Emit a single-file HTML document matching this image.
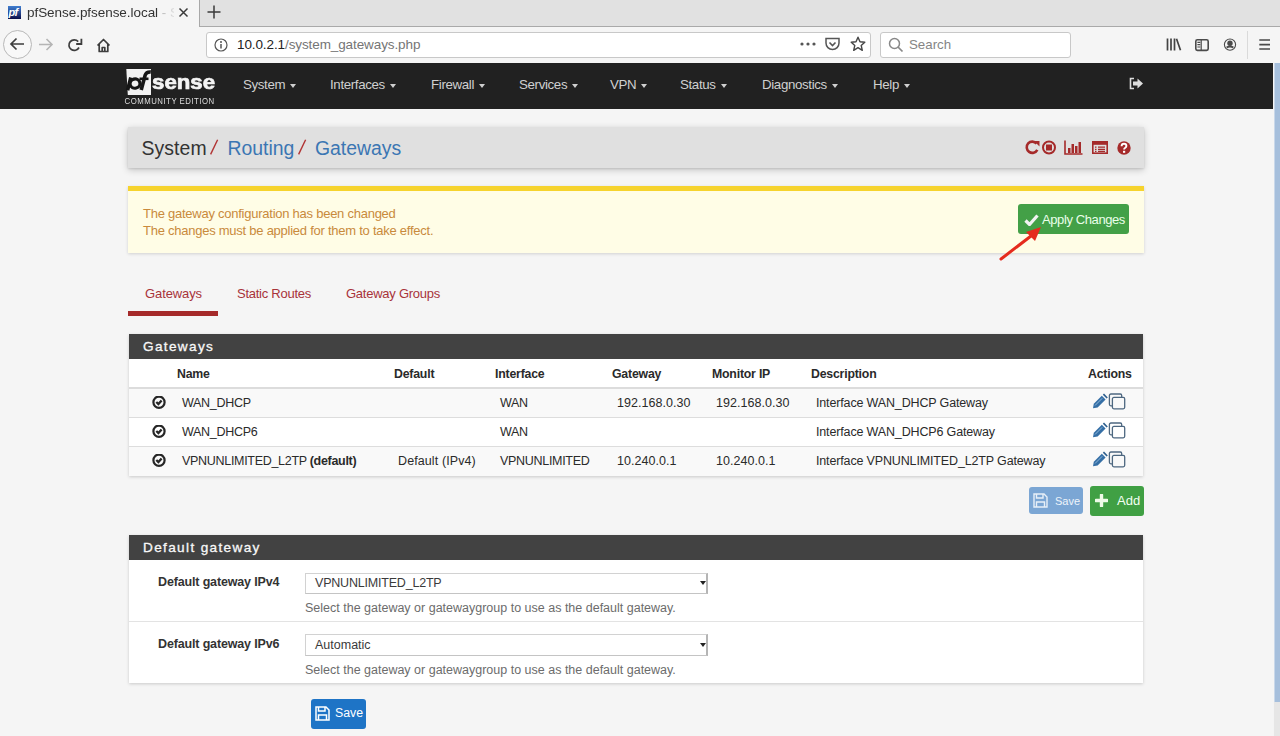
<!DOCTYPE html>
<html><head><meta charset="utf-8">
<style>
*{box-sizing:border-box}
html,body{margin:0;padding:0}
body{width:1280px;height:736px;overflow:hidden;position:relative;background:#f5f5f5;font-family:"Liberation Sans",sans-serif;color:#212121}
.a{position:absolute;white-space:nowrap}
/* browser chrome */
#tabbar{left:0;top:0;width:1280px;height:27px;background:#e1e1e1;border-bottom:1px solid #a9a9a9}
#tab{left:0;top:0;width:200px;height:27px;background:#f5f5f5;border-right:1px solid #a8a8a8}
#toolbar{left:0;top:27px;width:1280px;height:36px;background:#f5f5f5}
.urlbox{background:#fff;border:1px solid #c8c8c8;border-radius:3px}
/* pfsense nav */
#nav{left:0;top:63px;width:1273px;height:46px;background:#212121}
.nv{top:77px;color:#d0d0d0;font-size:13.3px;letter-spacing:-0.35px}
.caret{display:inline-block;width:0;height:0;border-left:3.5px solid transparent;border-right:3.5px solid transparent;border-top:4px solid #d0d0d0;vertical-align:middle;margin-left:5px;margin-top:2px}
#scroll{left:1274px;top:63px;width:6px;height:639px;background:#a6bfdc;border-left:1px solid #c9d8ea}
#track{left:1273px;top:702px;width:7px;height:34px;background:#e6e6e6;border-left:1px solid #f4f4f4}
.panelbox{background:#fff;box-shadow:0 1px 3px rgba(0,0,0,.18)}
.ph{background:#424242;color:#f8f8f8;font-size:13.6px;letter-spacing:1.35px;-webkit-text-stroke:0.3px #f8f8f8}
.th{font-weight:bold;font-size:12.3px;color:#2a2a2a;top:367px;letter-spacing:-0.2px}
.td{font-size:12.5px;color:#2a2a2a;letter-spacing:-0.3px}
.hr{height:1px;background:#ddd}
</style></head><body>

<!-- ===== Browser tab bar ===== -->
<div class="a" id="tabbar"></div>
<div class="a" id="tab"></div>
<!-- favicon -->
<div class="a" style="left:8px;top:6px;width:13px;height:13px;background:linear-gradient(180deg,#3f7ed0 0%,#2a4f9a 45%,#0c0c48 100%)"></div>
<div class="a" style="left:8.5px;top:6px;font:italic bold 11px 'Liberation Sans';color:#fff;line-height:13px;letter-spacing:-0.8px">pf</div>
<div class="a" style="left:27px;top:5px;width:147px;overflow:hidden;font-size:13.5px;color:#333;line-height:16px;letter-spacing:-0.05px;-webkit-mask-image:linear-gradient(90deg,#000 0,#000 131px,rgba(0,0,0,.3) 135px,rgba(0,0,0,.12) 147px)">pfSense.pfsense.local - System: Routing</div>
<svg class="a" style="left:178px;top:7px" width="11" height="11" viewBox="0 0 11 11"><path d="M1.5 1.5L9.5 9.5M9.5 1.5L1.5 9.5" stroke="#3a3a3a" stroke-width="1.5"/></svg>
<svg class="a" style="left:207px;top:5px" width="14" height="14" viewBox="0 0 14 14"><path d="M7 0.5V13.5M0.5 7H13.5" stroke="#3a3a3a" stroke-width="1.5"/></svg>

<!-- ===== Toolbar ===== -->
<div class="a" id="toolbar"></div>
<!-- back -->
<div class="a" style="left:3px;top:30px;width:29px;height:29px;border:1px solid #b8b8b8;border-radius:50%;background:#f8f8f8"></div>
<svg class="a" style="left:9px;top:37px" width="16" height="14" viewBox="0 0 16 14"><path d="M15 7H2M7.5 1.5L2 7l5.5 5.5" stroke="#3d3d3d" stroke-width="1.7" fill="none"/></svg>
<svg class="a" style="left:38px;top:38px" width="16" height="13" viewBox="0 0 16 13"><path d="M1 6.5H14M8.5 1L14 6.5 8.5 12" stroke="#b5b5b5" stroke-width="1.6" fill="none"/></svg>
<svg class="a" style="left:67px;top:37px" width="16" height="16" viewBox="0 0 16 16"><path d="M12 10.5A5.3 5.3 0 1 1 11.2 4.6" stroke="#3d3d3d" stroke-width="1.7" fill="none"/><path d="M14.4 1.8V7H9.2" stroke="#3d3d3d" stroke-width="1.8" fill="none"/></svg>
<svg class="a" style="left:96px;top:38px" width="15" height="15" viewBox="0 0 15 15"><path d="M1.5 7.5L7.5 1.5 13.5 7.5M3.2 6V13.5H11.8V6M6.2 13.5V9.5H8.8V13.5" stroke="#3d3d3d" stroke-width="1.7" fill="none" stroke-linejoin="round"/></svg>
<!-- url box -->
<div class="a urlbox" style="left:206px;top:32px;width:665px;height:26px"></div>
<svg class="a" style="left:214px;top:38px" width="14" height="14" viewBox="0 0 14 14"><circle cx="7" cy="7" r="6" stroke="#555" stroke-width="1.2" fill="none"/><circle cx="7" cy="4" r="1" fill="#555"/><path d="M7 6V10.5" stroke="#555" stroke-width="1.5"/></svg>
<div class="a" style="left:237px;top:37px;font-size:13.5px;line-height:16px;color:#222;letter-spacing:-0.1px">10.0.2.1<span style="color:#757575">/system_gateways.php</span></div>
<svg class="a" style="left:800px;top:42px" width="16" height="4" viewBox="0 0 16 4"><circle cx="2" cy="2" r="1.6" fill="#555"/><circle cx="8" cy="2" r="1.6" fill="#555"/><circle cx="14" cy="2" r="1.6" fill="#555"/></svg>
<svg class="a" style="left:825px;top:37px" width="15" height="14" viewBox="0 0 15 14"><path d="M1 1.5H14V6A6.5 6.5 0 0 1 1 6z" stroke="#555" stroke-width="1.5" fill="none"/><path d="M4.5 5.5L7.5 8.5 10.5 5.5" stroke="#555" stroke-width="1.6" fill="none"/></svg>
<svg class="a" style="left:850px;top:36px" width="16" height="16" viewBox="0 0 16 16"><path d="M8 1.2L10 5.8 14.8 6.2 11.2 9.4 12.3 14.3 8 11.7 3.7 14.3 4.8 9.4 1.2 6.2 6 5.8z" stroke="#444" stroke-width="1.4" fill="none" stroke-linejoin="round"/></svg>
<!-- search -->
<div class="a urlbox" style="left:880px;top:32px;width:191px;height:26px"></div>
<svg class="a" style="left:888px;top:37px" width="16" height="16" viewBox="0 0 16 16"><circle cx="6.5" cy="6.5" r="5" stroke="#888" stroke-width="1.5" fill="none"/><path d="M10 10L14.5 14.5" stroke="#888" stroke-width="1.7"/></svg>
<div class="a" style="left:909px;top:37px;font-size:13.3px;line-height:16px;color:#858585">Search</div>
<!-- right icons -->
<svg class="a" style="left:1166px;top:38px" width="16" height="13" viewBox="0 0 16 13"><path d="M1.5 0.5V12.5M5 0.5V12.5M8.5 0.5V12.5M10.5 0.8L14.5 12.3" stroke="#444" stroke-width="1.7"/></svg>
<svg class="a" style="left:1194px;top:38px" width="16" height="14" viewBox="0 0 16 14"><rect x="1.8" y="1.8" width="12.4" height="10.6" rx="1.6" stroke="#4a4a4a" stroke-width="1.6" fill="none"/><path d="M7.2 1.8V12.4M3.4 4.4H6.2M3.4 6.7H6.2M3.4 9H6.2" stroke="#4a4a4a" stroke-width="1.2"/></svg>
<svg class="a" style="left:1223px;top:37px" width="15" height="15" viewBox="0 0 15 15"><circle cx="7" cy="7.6" r="5.6" stroke="#4a4a4a" stroke-width="1.1" fill="none"/><circle cx="7" cy="6.2" r="2.7" fill="#4a4a4a"/><path d="M3.6 10.6Q7 8.4 10.4 10.6" stroke="#4a4a4a" stroke-width="1.8" fill="none"/></svg>
<div class="a" style="left:1247px;top:31px;width:1px;height:28px;background:#dadada"></div>
<svg class="a" style="left:1259px;top:38px" width="12" height="13" viewBox="0 0 12 13"><path d="M0.3 2H11M0.3 6.6H11M0.3 11H11" stroke="#4a4a4a" stroke-width="1.7"/></svg>

<!-- ===== pfSense navbar ===== -->
<div class="a" id="nav"></div>
<div class="a" id="scroll"></div>
<div class="a" id="track"></div>
<!-- logo -->
<svg class="a" style="left:120px;top:64px" width="100" height="42" viewBox="120 64 100 42">
<path d="M126.3 69H151V95H127.8z" fill="#f2f2f2"/>
<path d="M130.8 77.5L127.6 90.2" stroke="#161616" stroke-width="3.6" fill="none"/>
<ellipse cx="135" cy="83.6" rx="5" ry="4.6" stroke="#161616" stroke-width="3.2" fill="none" transform="rotate(-15 135 83.6)"/>
<path d="M141.2 90L145.2 75Q146.4 71.6 150.8 72" stroke="#161616" stroke-width="3.6" fill="none"/>
<path d="M139.5 78.8H148.5" stroke="#161616" stroke-width="2.6"/>
</svg>
<div class="a" style="left:152px;top:70px;font:bold 21px 'Liberation Sans';color:#f4f4f4;letter-spacing:0px;line-height:24px;-webkit-text-stroke:0.7px #f4f4f4;transform:scaleX(1.06);transform-origin:0 0">sense</div>
<div class="a" style="left:124.5px;top:96px;font-size:7.8px;color:#dedede;letter-spacing:0.5px;line-height:9px;transform:scaleY(1.12);transform-origin:0 0">COMMUNITY EDITION</div>
<div class="a nv" style="left:243px">System<span class="caret"></span></div>
<div class="a nv" style="left:330px">Interfaces<span class="caret"></span></div>
<div class="a nv" style="left:431px">Firewall<span class="caret"></span></div>
<div class="a nv" style="left:519px">Services<span class="caret"></span></div>
<div class="a nv" style="left:610px">VPN<span class="caret"></span></div>
<div class="a nv" style="left:680px">Status<span class="caret"></span></div>
<div class="a nv" style="left:762px">Diagnostics<span class="caret"></span></div>
<div class="a nv" style="left:873px">Help<span class="caret"></span></div>
<!-- logout icon -->
<svg class="a" style="left:1129px;top:77px" width="15" height="13" viewBox="0 0 15 13"><path d="M5 1.5H1.5V11.5H5" stroke="#ddd" stroke-width="1.6" fill="none"/><path d="M4 4.5H8.5V1.5L14 6.5 8.5 11.5V8.5H4z" fill="#ddd"/></svg>

<!-- ===== Breadcrumb panel ===== -->
<div class="a" style="left:128px;top:127px;width:1016px;height:41px;background:#e0e0e0;box-shadow:0 1px 2px rgba(0,0,0,.1),0 2px 7px rgba(0,0,0,.2)"></div>
<div class="a" style="left:141.5px;top:136.5px;font-size:19.4px;line-height:22px;color:#333;letter-spacing:0.1px">System</div>
<svg class="a" style="left:205px;top:136px" width="20" height="22" viewBox="0 0 20 22"><path d="M12.6 3.8L5.6 18.4" stroke="#b13434" stroke-width="1.4"/></svg>
<div class="a" style="left:227.5px;top:136.5px;font-size:19.4px;line-height:22px;color:#3b76b3">Routing</div>
<svg class="a" style="left:293px;top:136px" width="20" height="22" viewBox="0 0 20 22"><path d="M12.6 3.8L5.6 18.4" stroke="#b13434" stroke-width="1.4"/></svg>
<div class="a" style="left:315px;top:136.5px;font-size:19.4px;line-height:22px;color:#3b76b3">Gateways</div>
<!-- breadcrumb icons -->
<svg class="a" style="left:1025px;top:140px" width="32" height="15" viewBox="0 0 32 15"><path d="M12.3 9.8A5.6 5.6 0 1 1 11.6 3.6" stroke="#a52a2a" stroke-width="2.6" fill="none"/><path d="M9 1H14.5V6.5z" fill="#a52a2a"/><circle cx="24" cy="7.5" r="6" stroke="#a52a2a" stroke-width="2" fill="none"/><rect x="21" y="4.5" width="6" height="6" fill="#a52a2a"/></svg>
<svg class="a" style="left:1064px;top:140px" width="19" height="15" viewBox="0 0 19 15"><path d="M1 0.5V14H18.5" stroke="#a52a2a" stroke-width="1.6" fill="none"/><rect x="4" y="8" width="2.5" height="5" fill="#a52a2a"/><rect x="7.5" y="4" width="2.5" height="9" fill="#a52a2a"/><rect x="11" y="6" width="2.5" height="7" fill="#a52a2a"/><rect x="14.5" y="2" width="2.5" height="11" fill="#a52a2a"/></svg>
<svg class="a" style="left:1092px;top:141px" width="16" height="13" viewBox="0 0 16 13"><rect x="0.8" y="0.8" width="14.4" height="11.4" stroke="#a52a2a" stroke-width="1.6" fill="none"/><rect x="0.8" y="0.8" width="14.4" height="3" fill="#a52a2a"/><path d="M3 6.2H4.5M6 6.2H13M3 8.3H4.5M6 8.3H13M3 10.4H4.5M6 10.4H13" stroke="#a52a2a" stroke-width="1.3"/></svg>
<svg class="a" style="left:1117px;top:141px" width="14" height="14" viewBox="0 0 14 14"><circle cx="7" cy="7" r="6.7" fill="#a52a2a"/><path d="M4.6 5.2Q4.6 2.8 7 2.8 9.4 2.8 9.4 5 9.4 6.2 8 7 7.1 7.5 7.1 8.6" stroke="#fff" stroke-width="1.9" fill="none"/><rect x="6" y="9.8" width="2.2" height="2" fill="#fff"/></svg>

<!-- ===== Alert ===== -->
<div class="a" style="left:128px;top:186px;width:1016px;height:67px;background:#fffde6;border-top:5px solid #f6d32d;box-shadow:0 1px 3px rgba(0,0,0,.15)"></div>
<div class="a" style="left:143px;top:205px;font-size:13px;line-height:17px;color:#c98a3c;letter-spacing:-0.25px">The gateway configuration has been changed<br>The changes must be applied for them to take effect.</div>
<div class="a" style="left:1018px;top:204px;width:111px;height:30px;background:#43a047;border-radius:3px"></div>
<svg class="a" style="left:1024px;top:214px" width="15" height="12" viewBox="0 0 15 12"><path d="M1.5 6.5L5.5 10.5 13.5 1.5" stroke="#f2f2f2" stroke-width="3.2" fill="none"/></svg>
<div class="a" style="left:1042px;top:212px;font-size:13px;line-height:15px;color:#eaffea;letter-spacing:-0.4px">Apply Changes</div>
<!-- red annotation arrow -->
<svg class="a" style="left:990px;top:215px" width="60" height="50" viewBox="990 215 60 50"><path d="M1001 259L1031 236" stroke="#e52b1d" stroke-width="3" stroke-linecap="round"/><path d="M1041 227L1026 232 1035 241z" fill="#e52b1d"/></svg>

<!-- ===== Tabs ===== -->
<div class="a" style="left:145px;top:286px;font-size:13px;color:#a8333a;letter-spacing:-0.1px">Gateways</div>
<div class="a" style="left:237px;top:286px;font-size:13px;color:#a8333a;letter-spacing:-0.25px">Static Routes</div>
<div class="a" style="left:346px;top:286px;font-size:13px;color:#a8333a;letter-spacing:-0.25px">Gateway Groups</div>
<div class="a" style="left:128px;top:311px;width:90px;height:5px;background:#a52a2a"></div>

<!-- ===== Gateways panel ===== -->
<div class="a panelbox" style="left:129px;top:334px;width:1014px;height:142px"></div>
<div class="a ph" style="left:129px;top:334px;width:1014px;height:25px;padding:4.5px 0 0 14px;line-height:15px">Gateways</div>
<div class="a" style="left:129px;top:389px;width:1014px;height:29px;background:#f9f9f9"></div>
<div class="a" style="left:129px;top:447px;width:1014px;height:29px;background:#f9f9f9"></div>
<div class="a" style="left:129px;top:387px;width:1014px;height:2px;background:#dcdcdc"></div>
<div class="a hr" style="left:129px;top:417px;width:1014px"></div>
<div class="a hr" style="left:129px;top:446px;width:1014px"></div>

<div class="a th" style="left:177px">Name</div>
<div class="a th" style="left:394px">Default</div>
<div class="a th" style="left:495px">Interface</div>
<div class="a th" style="left:612px">Gateway</div>
<div class="a th" style="left:712px">Monitor IP</div>
<div class="a th" style="left:811px">Description</div>
<div class="a th" style="left:1088px">Actions</div>

<!-- rows -->
<div class="a td" style="left:182px;top:396px">WAN_DHCP</div>
<div class="a td" style="left:500px;top:396px">WAN</div>
<div class="a td" style="left:617px;top:396px;letter-spacing:0.05px">192.168.0.30</div>
<div class="a td" style="left:716px;top:396px;letter-spacing:0.05px">192.168.0.30</div>
<div class="a td" style="left:816px;top:396px;letter-spacing:-0.15px">Interface WAN_DHCP Gateway</div>

<div class="a td" style="left:182px;top:425px">WAN_DHCP6</div>
<div class="a td" style="left:500px;top:425px">WAN</div>
<div class="a td" style="left:816px;top:425px;letter-spacing:-0.15px">Interface WAN_DHCP6 Gateway</div>

<div class="a td" style="left:182px;top:454px">VPNUNLIMITED_L2TP <b>(default)</b></div>
<div class="a td" style="left:398px;top:454px;letter-spacing:0.1px">Default (IPv4)</div>
<div class="a td" style="left:500px;top:454px">VPNUNLIMITED</div>
<div class="a td" style="left:617px;top:454px;letter-spacing:0.05px">10.240.0.1</div>
<div class="a td" style="left:716px;top:454px;letter-spacing:0.05px">10.240.0.1</div>
<div class="a td" style="left:816px;top:454px;letter-spacing:-0.15px">Interface VPNUNLIMITED_L2TP Gateway</div>

<!-- row icons -->
<svg class="a" style="left:152px;top:396px" width="14" height="13" viewBox="0 0 14 13"><circle cx="7" cy="6.2" r="5.6" stroke="#262626" stroke-width="2.2" fill="none"/><path d="M4.3 6L6.4 8.1 9.6 4.4" stroke="#262626" stroke-width="2.3" fill="none"/></svg>
<svg class="a" style="left:152px;top:425px" width="14" height="13" viewBox="0 0 14 13"><circle cx="7" cy="6.2" r="5.6" stroke="#262626" stroke-width="2.2" fill="none"/><path d="M4.3 6L6.4 8.1 9.6 4.4" stroke="#262626" stroke-width="2.3" fill="none"/></svg>
<svg class="a" style="left:152px;top:454px" width="14" height="13" viewBox="0 0 14 13"><circle cx="7" cy="6.2" r="5.6" stroke="#262626" stroke-width="2.2" fill="none"/><path d="M4.3 6L6.4 8.1 9.6 4.4" stroke="#262626" stroke-width="2.3" fill="none"/></svg>

<svg class="a" style="left:1092px;top:393px" width="34" height="17" viewBox="0 0 34 17"><path d="M1 15.2L1.8 10.8 9.8 2.8 13.6 6.6 5.6 14.6z" fill="#356fa6"/><path d="M3 12.5L10.2 5.3" stroke="#9cc0e0" stroke-width="0.9"/><path d="M10.8 1.8L12 0.6 15.8 4.4 14.6 5.6z" fill="#2e5f8e"/><rect x="17.4" y="1" width="12.3" height="11.8" rx="1.5" stroke="#4d6780" stroke-width="1.3" fill="none"/><rect x="20.4" y="4.4" width="12.3" height="11.4" rx="1.5" stroke="#4d6780" stroke-width="1.3" fill="#f9f9f9"/></svg>
<svg class="a" style="left:1092px;top:422px" width="34" height="17" viewBox="0 0 34 17"><path d="M1 15.2L1.8 10.8 9.8 2.8 13.6 6.6 5.6 14.6z" fill="#356fa6"/><path d="M3 12.5L10.2 5.3" stroke="#9cc0e0" stroke-width="0.9"/><path d="M10.8 1.8L12 0.6 15.8 4.4 14.6 5.6z" fill="#2e5f8e"/><rect x="17.4" y="1" width="12.3" height="11.8" rx="1.5" stroke="#4d6780" stroke-width="1.3" fill="none"/><rect x="20.4" y="4.4" width="12.3" height="11.4" rx="1.5" stroke="#4d6780" stroke-width="1.3" fill="#fff"/></svg>
<svg class="a" style="left:1092px;top:451px" width="34" height="17" viewBox="0 0 34 17"><path d="M1 15.2L1.8 10.8 9.8 2.8 13.6 6.6 5.6 14.6z" fill="#356fa6"/><path d="M3 12.5L10.2 5.3" stroke="#9cc0e0" stroke-width="0.9"/><path d="M10.8 1.8L12 0.6 15.8 4.4 14.6 5.6z" fill="#2e5f8e"/><rect x="17.4" y="1" width="12.3" height="11.8" rx="1.5" stroke="#4d6780" stroke-width="1.3" fill="none"/><rect x="20.4" y="4.4" width="12.3" height="11.4" rx="1.5" stroke="#4d6780" stroke-width="1.3" fill="#f9f9f9"/></svg>

<!-- Save / Add -->
<div class="a" style="left:1029px;top:487px;width:54px;height:27px;background:#7ba6d4;border-radius:3px"></div>
<svg class="a" style="left:1033px;top:493px" width="15" height="15" viewBox="0 0 15 15"><path d="M1 1H11L14 4V14H1z" stroke="#e8f0f8" stroke-width="1.4" fill="none"/><path d="M3.5 1V5H10V1M3.5 14V9H11.5V14" stroke="#e8f0f8" stroke-width="1.4" fill="none"/></svg>
<div class="a" style="left:1055px;top:494px;font-size:11px;color:#eef4fa;line-height:14px">Save</div>
<div class="a" style="left:1090px;top:486px;width:54px;height:30px;background:#40a044;border-radius:3px"></div>
<svg class="a" style="left:1095px;top:494px" width="13" height="13" viewBox="0 0 13 13"><path d="M6.5 1V12M1 6.5H12" stroke="#eefbe8" stroke-width="3.4" stroke-linecap="round"/></svg>
<div class="a" style="left:1117px;top:494px;font-size:13px;color:#f2fff2;line-height:14px">Add</div>

<!-- ===== Default gateway panel ===== -->
<div class="a panelbox" style="left:129px;top:535px;width:1014px;height:148px"></div>
<div class="a ph" style="left:129px;top:535px;width:1014px;height:25px;padding:4.5px 0 0 14px;line-height:15px">Default gateway</div>
<div class="a hr" style="left:129px;top:621px;width:1014px;background:#e3e3e3"></div>

<div class="a" style="left:158px;top:575px;font-weight:bold;font-size:12.5px;color:#333;letter-spacing:-0.15px">Default gateway IPv4</div>
<div class="a" style="left:305px;top:573px;width:403px;height:21px;border:1px solid #d2d2d2;border-right:2px solid #b5b5b5;border-bottom-color:#c4c4c4;background:#fff"></div>
<div class="a" style="left:315px;top:576px;font-size:12.5px;color:#3a3a3a;letter-spacing:-0.2px">VPNUNLIMITED_L2TP</div>
<div class="a" style="left:700px;top:581px;width:0;height:0;border-left:3px solid transparent;border-right:3px solid transparent;border-top:4px solid #222"></div>
<div class="a" style="left:305px;top:601px;font-size:12.5px;color:#6c6c6c;letter-spacing:0px">Select the gateway or gatewaygroup to use as the default gateway.</div>

<div class="a" style="left:158px;top:637px;font-weight:bold;font-size:12.5px;color:#333;letter-spacing:-0.15px">Default gateway IPv6</div>
<div class="a" style="left:305px;top:634px;width:403px;height:22px;border:1px solid #d2d2d2;border-right:2px solid #b5b5b5;border-bottom-color:#c4c4c4;background:#fff"></div>
<div class="a" style="left:315px;top:638px;font-size:12.5px;color:#3a3a3a;letter-spacing:0px">Automatic</div>
<div class="a" style="left:700px;top:643px;width:0;height:0;border-left:3px solid transparent;border-right:3px solid transparent;border-top:4px solid #222"></div>
<div class="a" style="left:305px;top:663px;font-size:12.5px;color:#6c6c6c;letter-spacing:0px">Select the gateway or gatewaygroup to use as the default gateway.</div>

<div class="a" style="left:311px;top:699px;width:55px;height:30px;background:#1e74c6;border-radius:3px"></div>
<svg class="a" style="left:315px;top:706px" width="15" height="15" viewBox="0 0 15 15"><path d="M1 1H11L14 4V14H1z" stroke="#fff" stroke-width="1.5" fill="none"/><path d="M3.5 1V5H10V1M3.5 14V9H11.5V14" stroke="#fff" stroke-width="1.5" fill="none"/></svg>
<div class="a" style="left:335px;top:706px;font-size:12.3px;color:#fff;line-height:15px">Save</div>

</body></html>
